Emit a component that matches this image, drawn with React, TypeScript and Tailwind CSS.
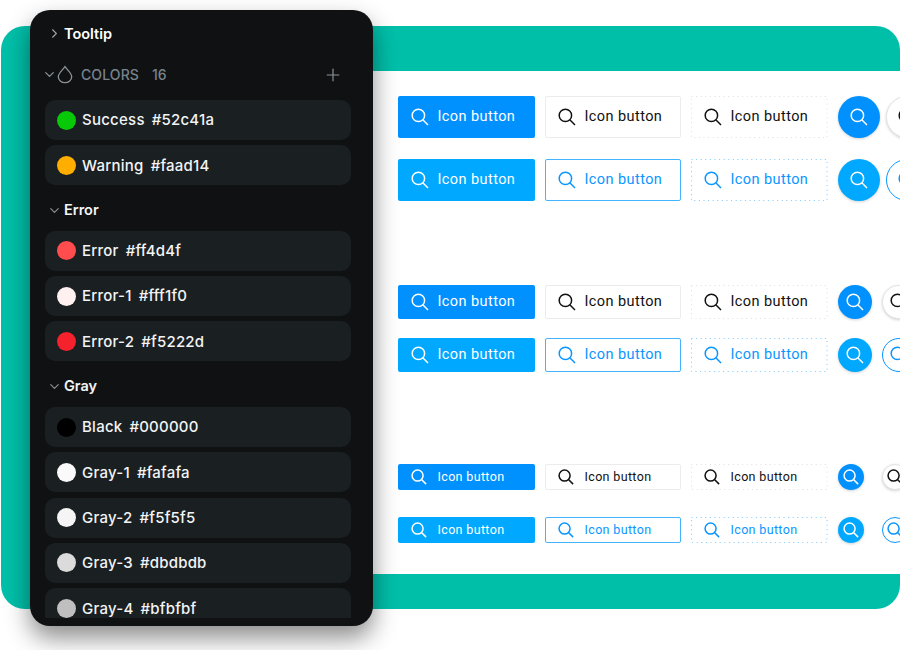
import { Plus, ChevronRight, ChevronDown } from 'lucide-react';

type Size = 'lg' | 'md' | 'sm';

const heights: Record<Size, string> = { lg: 'h-[42px]', md: 'h-[34px]', sm: 'h-[26px]' };
const circles: Record<Size, string> = { lg: 'w-[42px] h-[42px]', md: 'w-[34px] h-[34px]', sm: 'w-[26px] h-[26px]' };
const labels: Record<Size, string> = {
  lg: 'text-[14.5px] tracking-[0.42px]',
  md: 'text-[14.5px] tracking-[0.42px]',
  sm: 'text-[12.5px] tracking-[0.35px]',
};

function SearchIcon({ size }: { size: Size }) {
  const px = size === 'sm' ? 16 : 18;
  return (
    <svg width={px} height={px} viewBox="0 0 18 18" fill="none" stroke="currentColor" strokeWidth={size === 'sm' ? 1.7 : 1.5} className="shrink-0">
      <circle cx="7.4" cy="7.4" r="6.2" />
      <path d="M11.8 11.8L17 17" />
    </svg>
  );
}

function DottedEdge({ color }: { color: string }) {
  return (
    <svg className="absolute inset-0 w-full h-full" fill="none">
      <rect x="0.5" y="0.5" width="135.5" style={{ height: 'calc(100% - 1px)' }} stroke={color} strokeDasharray="1 3.6" />
    </svg>
  );
}

function IconButton({ size, className, dotted }: { size: Size; className: string; dotted?: string }) {
  return (
    <div className={`relative w-[136.5px] shrink-0 flex items-center pl-[12.5px] rounded-[2px] ${heights[size]} ${className}`}>
      {dotted && <DottedEdge color={dotted} />}
      <SearchIcon size={size} />
      <span className={`font-['Roboto',sans-serif] ${size === 'sm' ? 'ml-[11px]' : 'ml-[9px]'} ${labels[size]}`}>Icon button</span>
    </div>
  );
}

function CircleButton({ size, className }: { size: Size; className: string }) {
  return (
    <div className={`shrink-0 rounded-full flex items-center justify-center ${circles[size]} ${className}`}>
      <SearchIcon size={size} />
    </div>
  );
}

function ButtonGroup({ size, gap, circleGap }: { size: Size; gap: string; circleGap: string }) {
  return (
    <div className={`flex flex-col ${gap}`}>
      <div className="flex items-center gap-[10px]">
        <IconButton size={size} className="bg-[#0091ff] text-white" />
        <IconButton size={size} className="bg-white border border-[#ececec] text-[#111] pl-[12px]" />
        <IconButton size={size} dotted="#dedede" className="bg-white text-[#111]" />
        <div className={`flex items-center ml-[0.5px] ${circleGap}`}>
          <CircleButton size={size} className="bg-[#0091ff] text-white shadow-[0_1px_3px_rgba(0,0,0,0.18)]" />
          <CircleButton size={size} className="bg-white border border-[#e4e4e4] text-[#111] shadow-[0_1px_3px_rgba(0,0,0,0.18)]" />
        </div>
      </div>
      <div className="flex items-center gap-[10px]">
        <IconButton size={size} className="bg-[#00a8ff] text-white" />
        <IconButton size={size} className="bg-white border border-[#45b4ff] text-[#0a96ff] pl-[12px]" />
        <IconButton size={size} dotted="#7cc9ff" className="bg-white text-[#0a96ff]" />
        <div className={`flex items-center ml-[0.5px] ${circleGap}`}>
          <CircleButton size={size} className="bg-[#00a8ff] text-white shadow-[0_1px_3px_rgba(0,0,0,0.18)]" />
          <CircleButton size={size} className="bg-white border border-[#0a96ff] text-[#0a96ff]" />
        </div>
      </div>
    </div>
  );
}

function ColorRow({ name, hex, color }: { name: string; hex: string; color: string }) {
  return (
    <div className="h-10 shrink-0 rounded-[10px] bg-[#1a1f22] flex items-center pl-3">
      <span className="w-[19px] h-[19px] rounded-full shrink-0" style={{ backgroundColor: color }} />
      <span className="ml-[6px] pt-px text-[15px] font-medium text-[#f2f4f5] whitespace-nowrap">
        <span className="tracking-[0.25px]">{name}</span>
        <span className="ml-[7px] tracking-[0.2px]">{hex}</span>
      </span>
    </div>
  );
}

function GroupTitle({ title }: { title: string }) {
  return (
    <div className="h-[21px] flex items-center pl-[2px] text-white">
      <ChevronDown size={15} className="text-[#8b9499]" strokeWidth={1.8} />
      <span className="ml-[2px] text-[14.5px] font-semibold text-[#f2f4f5]">{title}</span>
    </div>
  );
}

export default function App() {
  return (
    <div className="relative w-[900px] h-[650px] overflow-hidden bg-white font-['Inter',sans-serif]">
      {/* Зелёная подложка с кнопками */}
      <div className="ml-px mt-[26px] h-[583px] rounded-[24px] bg-[#00bfa9] pl-[372px] pt-[45px] overflow-hidden">
        <div className="h-[503px] bg-white pl-[25px] pt-[25px] overflow-hidden flex flex-col">
          <ButtonGroup size="lg" gap="gap-[21px]" circleGap="gap-[6px]" />
          <div className="mt-[84px]">
            <ButtonGroup size="md" gap="gap-[19px]" circleGap="gap-[10px]" />
          </div>
          <div className="mt-[92px]">
            <ButtonGroup size="sm" gap="gap-[27px]" circleGap="gap-[18px]" />
          </div>
        </div>
      </div>

      {/* Тёмная панель */}
      <div className="absolute left-[30px] top-[10px] w-[343px] h-[616px] rounded-[20px] bg-[#101113] shadow-[0_12px_24px_rgba(0,0,0,0.45)] pb-2">
        <div className="h-full overflow-hidden px-[15px]">
          <div className="h-[47px] flex items-center pl-[2px]">
            <ChevronRight size={15} className="text-[#9aa3a8]" strokeWidth={1.8} />
            <span className="ml-[2px] text-[14.5px] font-semibold text-white">Tooltip</span>
          </div>
          <div className="h-[35px] flex items-center -ml-[3px] pr-[10px]">
            <ChevronDown size={15} className="text-[#8b9499]" strokeWidth={2} />
            <svg width="16" height="19" viewBox="0 0 16 18" fill="none" stroke="#8b9499" strokeWidth="1.3">
              <path d="M8 1.2C6.5 3.6 1.3 7.6 1.3 11.2a6.7 6 0 0 0 13.4 0C14.7 7.6 9.5 3.6 8 1.2z" />
            </svg>
            <span className="ml-[8px] text-[14px] font-medium tracking-[0.1px] text-[#77838c]">COLORS</span>
            <span className="ml-[13px] text-[14px] font-medium text-[#77838c]">16</span>
            <Plus size={20} className="ml-auto mr-[5px] text-[#8b9499]" strokeWidth={1.4} />
          </div>
          <div className="mt-[8px] flex flex-col gap-[5.3px] w-[306px]">
            <ColorRow name="Success" hex="#52c41a" color="#08c908" />
            <ColorRow name="Warning" hex="#faad14" color="#ffae00" />
            <div className="mt-[9px] mb-[5px]">
              <GroupTitle title="Error" />
            </div>
            <ColorRow name="Error" hex="#ff4d4f" color="#ff4d4f" />
            <ColorRow name="Error-1" hex="#fff1f0" color="#fff1f0" />
            <ColorRow name="Error-2" hex="#f5222d" color="#f5222d" />
            <div className="mt-[9px] mb-[5px]">
              <GroupTitle title="Gray" />
            </div>
            <ColorRow name="Black" hex="#000000" color="#000000" />
            <ColorRow name="Gray-1" hex="#fafafa" color="#fafafa" />
            <ColorRow name="Gray-2" hex="#f5f5f5" color="#f5f5f5" />
            <ColorRow name="Gray-3" hex="#dbdbdb" color="#dbdbdb" />
            <ColorRow name="Gray-4" hex="#bfbfbf" color="#bfbfbf" />
          </div>
        </div>
      </div>
    </div>
  );
}
